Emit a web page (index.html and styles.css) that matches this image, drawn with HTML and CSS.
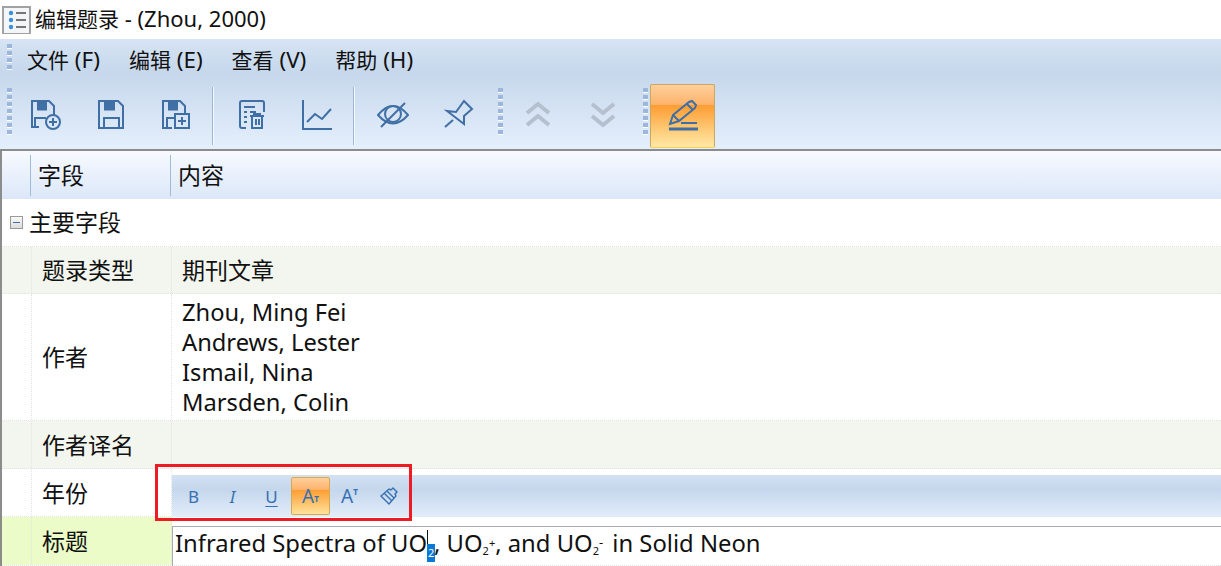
FILE: index.html
```html
<!DOCTYPE html>
<html lang="zh-CN">
<head>
<meta charset="utf-8">
<title>编辑题录</title>
<link rel="stylesheet" href="styles.css">
</head>
<body>
<div class="window">
  <header class="titlebar">
    <svg class="appicon" width="30" height="32" viewBox="0 0 30 32"><rect x="2" y="5" width="27" height="27" fill="#f4f5f7" stroke="#a2a2a2" stroke-width="2"/><g fill="#3d8fd6"><circle cx="10" cy="11" r="2.2"/><circle cx="10" cy="18" r="2.2"/><circle cx="10" cy="25" r="2.2"/></g><g stroke="#777" stroke-width="2"><path d="M15 11h10M15 18h10M15 25h10"/></g></svg>
    <span class="title-text"><span class="cjk">编辑题录</span> - (Zhou, 2000)</span>
  </header>
  <nav class="menubar">
    <i class="grip grip-menu"></i>
    <span class="menu-item"><span class="cjk">文件</span> (F)</span>
    <span class="menu-item"><span class="cjk">编辑</span> (E)</span>
    <span class="menu-item"><span class="cjk">查看</span> (V)</span>
    <span class="menu-item"><span class="cjk">帮助</span> (H)</span>
  </nav>
  <div class="toolbar">
    <i class="grip"></i>
    <button class="tool first"><svg width="32" height="32" viewBox="0 0 32 32" class="ic"><path d="M9 28H2V2h17l5 5v9"/><path d="M7 2.5h10v9H7z" class="solid"/><path d="M5 28V19h11"/><circle cx="23" cy="23" r="7"/><path d="M23 19v8M19 23h8"/></svg></button>
    <button class="tool"><svg width="32" height="32" viewBox="0 0 32 32" class="ic"><path d="M4 2h19l5 5v22H4z"/><path d="M9 2.5h11v9H9z" class="solid"/><path d="M9 29V19h15v10"/></svg></button>
    <button class="tool"><svg width="32" height="32" viewBox="0 0 32 32" class="ic"><path d="M12 29H3V2h17l5 5v8"/><path d="M8 2.5h10v9H8z" class="solid"/><path d="M7 29V19h8"/><path d="M15 15h14v14H15z"/><path d="M22 18v8M18 22h8"/></svg></button>
    <i class="sep"></i>
    <button class="tool"><svg width="32" height="32" viewBox="0 0 32 32" class="ic"><path d="M10 29H6q-2 0-2-2V4q0-2 2-2h20q2 0 2 2v9"/><path d="M8 8h11M8 13h3M14 13h6M8 18h3M8 23h3"/><path d="M14 17h14M18 17v-2h6v2M16 17v12h10V17M20 20v6M23 20v6"/></svg></button>
    <button class="tool"><svg width="32" height="32" viewBox="0 0 32 32" class="ic"><path d="M2 1v29h29"/><path d="M6 23l8-8 7 5 9-10"/></svg></button>
    <i class="sep"></i>
    <button class="tool"><svg width="32" height="32" viewBox="0 0 32 32" class="ic"><path d="M1 16q15-18 30 0q-15 17-30 0z"/><circle cx="16" cy="15" r="8"/><path d="M4 28L28 4"/></svg></button>
    <button class="tool"><svg width="32" height="32" viewBox="0 0 32 32" class="ic"><path d="M5 12l9 1 8-11 8 8-8 7 0 8z"/><path d="M11 21l-8 7"/></svg></button>
    <i class="grip"></i>
    <button class="tool off"><svg width="32" height="32" viewBox="0 0 32 32" class="ic thick"><path d="M5 14L16 5l11 9M5 26l11-9 11 9"/></svg></button>
    <button class="tool off"><svg width="32" height="32" viewBox="0 0 32 32" class="ic thick"><path d="M5 5l11 9 11-9M5 17l11 9 11-9"/></svg></button>
    <i class="grip"></i>
    <button class="tool on"><svg width="32" height="32" viewBox="0 0 32 32" class="ic"><path d="M3 25l3-9L22 3l3-1 4 4-1 3-16 13z"/><path d="M6 16l6 6M20 5l6 6"/><path d="M14 24h16" /><path d="M2 30h29" class="bar"/></svg></button>
  </div>
  <main class="grid">
    <div class="row head">
      <div class="c0"></div>
      <div class="c1 hcell">字段</div>
      <div class="c2 hcell">内容</div>
    </div>
    <div class="row group">
      <span class="expander"></span><span>主要字段</span>
    </div>
    <div class="row r47 alt"><div class="c0"></div><div class="c1 label">题录类型</div><div class="c2 value">期刊文章</div></div>
    <div class="row r127"><div class="c0"></div><div class="c1 label">作者</div><div class="c2 lines"><span>Zhou, Ming Fei</span><span>Andrews, Lester</span><span>Ismail, Nina</span><span>Marsden, Colin</span></div></div>
    <div class="row r48 alt"><div class="c0"></div><div class="c1 label">作者译名</div><div class="c2 value"></div></div>
    <div class="row r48"><div class="c0"></div><div class="c1 label">年份</div><div class="c2 value"></div></div>
    <div class="row r49 current"><div class="c0"></div><div class="c1 label">标题</div>
      <div class="c2 editor-wrap"><div class="editor">Infrared Spectra of UO<span class="caret"></span><sub class="selected">2</sub>, UO<sub>2</sub><sup>+</sup>, and UO<sub>2</sub><sup class="minus">-</sup> in Solid Neon</div></div>
    </div>
  </main>
  <div class="minibar">
    <span class="mini">B</span>
    <span class="mini italic">I</span>
    <span class="mini under">U</span>
    <span class="mini on big">A<small class="low">T</small></span>
    <span class="mini big">A<small class="high">T</small></span>
    <span class="mini"><svg width="20" height="20" viewBox="0 0 20 20" class="eraser"><path d="M2 10l8-7 2 1 2-2 4 4-2 2 1 2-7 8z"/><path d="M5 7l8 8M8 5l7 7"/></svg></span>
  </div>
  <div class="callout"></div>
</div>
</body>
</html>
```
FILE: styles.css
```css
* { box-sizing: border-box; }
html, body { margin: 0; padding: 0; height: 100%; overflow: hidden; background: #fff; }
body { font-family: "Noto Sans", "Noto Sans CJK SC", sans-serif; color: #111; }
.window { position: relative; width: 1221px; height: 566px; overflow: hidden; }
.cjk { font-size: 21px; }

.titlebar { height: 39px; display: flex; align-items: center; padding-left: 1px; gap: 4px; background: #fff; }
.appicon { flex: none; margin-top: -3px; }
.title-text { font-size: 22px; line-height: 39px; margin-top: -1px; white-space: nowrap; }

.menubar { height: 36px; display: flex; align-items: center; padding: 5px 0 0 6px; background: linear-gradient(#d6e4f4, #c5d7eb); font-size: 22.4px; }
.menu-item { margin-right: 29px; white-space: nowrap; }
.menu-item:first-of-type { margin-left: 16px; }

.grip { display: block; flex: none; width: 5px; height: 48px; background: repeating-linear-gradient(#9db7dc 0 4px, #fff 4px 5px, transparent 5px 7px); }
.grip-menu { height: 26px; margin-top: -5px; margin-left: 1px; margin-right: -1px; }

.toolbar { height: 76px; display: flex; align-items: center; padding-left: 7px; background: linear-gradient(#c7d8ec, #e4effc); border-bottom: 2px solid #8c8c8c; }
.tool { flex: none; width: 65px; height: 64px; margin-top: 7px; padding: 0; border: 0; background: none; display: flex; align-items: center; justify-content: center; }
.tool svg { margin-top: -2px; }
.toolbar > .grip + .tool { margin-left: 2px; }
.toolbar > .grip + .tool.first { margin-left: 1px; }
.toolbar > .tool + .grip { margin-left: 8px; }
.tool.on { border: 1px solid #c9a95f; border-bottom-color: #ffd04f; border-radius: 2px; background: linear-gradient(#ffcf9c 0, #fdb36a 32%, #fd9d33 33%, #ffd98d 85%, #ffe9a6 100%); }
.ic { fill: none; stroke: #3f6fa5; stroke-width: 2; }
.ic .solid { fill: #3f6fa5; stroke: none; }
.ic .bar { stroke-width: 3; }
.ic.thick { stroke: #b4c0cd; stroke-width: 4; }
.sep { display: block; flex: none; width: 2px; height: 58px; margin: 7px 5px 0 4px; background: linear-gradient(90deg, #9fb6d4 50%, #f4f8fd 50%); }

.grid { border-left: 2px solid #8c8c8c; }
.row { display: flex; border-bottom: 1px dotted #e2e2e2; }
.c0 { width: 30px; flex: none; border-right: 1px dotted #e2e2e2; }
.c1 { width: 140px; flex: none; border-right: 1px dotted #e2e2e2; }
.c2 { flex: 1; min-width: 0; }
.head { height: 48px; border: 0; background: linear-gradient(#f7faff, #dbe7f8); }
.head .c0 { width: 28px; border: 0; }
.head .c1 { border: 0; }
.hcell { display: flex; align-items: center; padding-left: 7px; font-size: 23px; }
.head .c1, .head .c2 { border-left: 1px solid #9ebbdc; height: 41px; margin-top: 4px; padding-bottom: 3px; }
.group { height: 48px; align-items: center; font-size: 23px; gap: 6px; padding: 0 0 1px 8px; }
.group span:last-child { margin-top: -3px; }
.expander { position: relative; width: 13px; height: 13px; border: 1px solid #999; background: linear-gradient(#fafafa, #dcdcdc); }
.expander::after { content: ""; position: absolute; left: 2px; right: 2px; top: 5px; height: 1px; background: #3f6fa5; }
.r47 { height: 47px; }
.r48 { height: 48px; }
.r127 { height: 127px; }
.r49 { height: 49px; }
.alt { background: #f3f6ee; }
.current .c0, .current .c1 { background: #ecfcc8; }
.label { display: flex; align-items: center; padding: 0 0 2px 10px; font-size: 23px; }
.value { display: flex; align-items: center; padding: 0 0 2px 10px; font-size: 23px; }
.lines { display: flex; flex-direction: column; align-items: flex-start; justify-content: center; padding-left: 10px; line-height: 30px; font-size: 23.7px; }

.editor-wrap { padding-top: 9px; }
.editor { height: 40px; border-top: 1px solid #a9a9b2; border-left: 1px solid #a9a9b2; padding-left: 2px; font-size: 23.8px; line-height: 32px; white-space: nowrap; }
.editor sub, .editor sup { font-size: 11px; line-height: 0; }
.editor sub { vertical-align: -3px; }
.editor sup { vertical-align: 5px; }
.editor .minus { font-size: 13px; margin-right: 3px; }
.selected { display: inline-block; width: 8px; height: 18px; line-height: 18px !important; background: #0a78d7; color: #fff; text-align: center; vertical-align: -5px !important; margin-right: -1px; }
.caret { display: inline-block; width: 1px; height: 26px; background: #111; vertical-align: -4px; margin-right: -1px; }

.minibar { position: absolute; left: 172px; top: 475px; right: 0; height: 42px; display: flex; align-items: center; padding-left: 2px; background: linear-gradient(#d3e1f2, #c5d7ec 35%, #e2edfb); }
.mini { flex: none; width: 39px; height: 38px; display: flex; align-items: center; justify-content: center; font-size: 17px; color: #3670b3; font-weight: 400; }
.mini small { font-size: 8px; font-weight: 700; }
.low { align-self: flex-end; margin-bottom: 10px; }
.high { align-self: flex-start; margin-top: 9px; }
.italic { font-style: italic; }
.under { text-decoration: underline; text-underline-offset: 3px; }
.big { font-size: 19px; }
.mini.on { border: 1px solid #d6a94f; border-radius: 2px; background: linear-gradient(#ffcf9c, #fdb36a 32%, #fd9d33 33%, #ffe29a 100%); }
.eraser { fill: none; stroke: #3670b3; stroke-width: 1.4; }

.callout { position: absolute; left: 155px; top: 464px; width: 257px; height: 57px; border: 3px solid #ed1c24; }
```
